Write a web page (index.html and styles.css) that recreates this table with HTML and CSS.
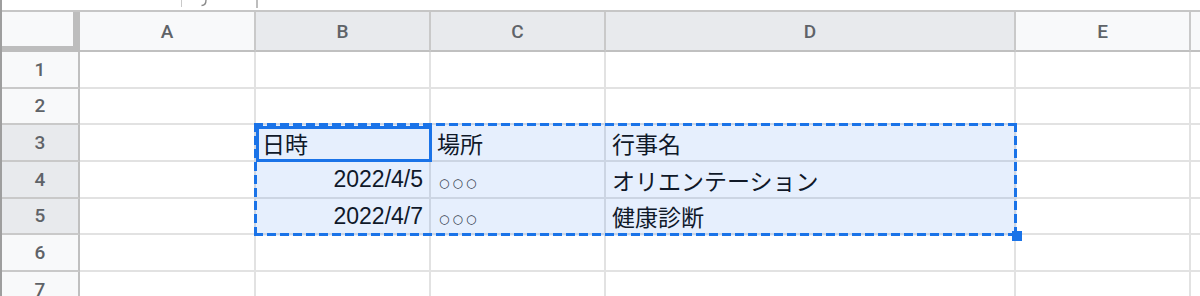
FILE: index.html
```html
<!DOCTYPE html>
<html lang="ja">
<head>
<meta charset="utf-8">
<title>シート1</title>
<link rel="stylesheet" href="styles.css">
</head>
<body>
<div class="sheet">
  <div class="formula-edge">
    <span class="fx-sep"></span>
    <svg class="fx-tail" width="10" height="7" viewBox="0 0 10 7"><path d="M7 0 C7 3.5 6 5.5 2.5 5.5" fill="none" stroke="#8a8a8a" stroke-width="1.4"/></svg>
    <span class="fx-sep dark"></span>
  </div>

  <div class="grid">
    <div class="corner"></div>
    <div class="col-head">A</div>
    <div class="col-head on">B</div>
    <div class="col-head on">C</div>
    <div class="col-head on">D</div>
    <div class="col-head">E</div>
    <div class="col-head"></div>

    <div class="row-head">1</div>
    <div class="cell"></div><div class="cell"></div><div class="cell"></div><div class="cell"></div><div class="cell"></div><div class="cell"></div>

    <div class="row-head">2</div>
    <div class="cell"></div><div class="cell"></div><div class="cell"></div><div class="cell"></div><div class="cell"></div><div class="cell"></div>

    <div class="row-head on">3</div>
    <div class="cell"></div>
    <div class="cell">日時</div>
    <div class="cell">場所</div>
    <div class="cell">行事名</div>
    <div class="cell"></div><div class="cell"></div>

    <div class="row-head on">4</div>
    <div class="cell"></div>
    <div class="cell num">2022/4/5</div>
    <div class="cell"><span class="marks">○○○</span></div>
    <div class="cell">オリエンテーション</div>
    <div class="cell"></div><div class="cell"></div>

    <div class="row-head on">5</div>
    <div class="cell"></div>
    <div class="cell num">2022/4/7</div>
    <div class="cell"><span class="marks">○○○</span></div>
    <div class="cell">健康診断</div>
    <div class="cell"></div><div class="cell"></div>

    <div class="row-head">6</div>
    <div class="cell"></div><div class="cell"></div><div class="cell"></div><div class="cell"></div><div class="cell"></div><div class="cell"></div>

    <div class="row-head">7</div>
    <div class="cell"></div><div class="cell"></div><div class="cell"></div><div class="cell"></div><div class="cell"></div><div class="cell"></div>

    <!-- copied range B3:D5 and the active cell B3, laid over the cells -->
    <div class="range"><span class="handle"></span></div>
    <div class="active"></div>
  </div>
</div>
</body>
</html>
```

FILE: styles.css
```css
html, body {
  margin: 0;
  padding: 0;
  background: #fff;
  overflow: hidden;
}

.sheet {
  width: 1200px;
  height: 296px;
  border-left: 2px solid #9e9e9e;
  box-sizing: border-box;
  overflow: hidden;
  font-family: "Liberation Sans", "Noto Sans CJK JP", Arial, sans-serif;
}

/* bottom edge of the formula bar */
.formula-edge {
  height: 10px;
  display: flex;
  align-items: flex-start;
  padding-left: 179px;
}
.fx-sep {
  width: 1px;
  height: 7px;
  background: #c9c9c9;
}
.fx-sep.dark {
  width: 2px;
  height: 8px;
  background: #bdbdbd;
  margin-left: 47px;
}
.fx-tail {
  margin-left: 17px;
}

.grid {
  position: relative;
  display: grid;
  grid-template-columns: 78px 176px 175px 175px 410px 175px 1fr;
  grid-template-rows: 40px 37px 36px 37px 37px 36px 37px 37px;
  border-top: 2px solid #c6c6c6;
}

.grid > div {
  box-sizing: border-box;
}

.corner {
  background: #f8f9fa;
  border-right: 7px solid #bdbdbd;
  border-bottom: 6px solid #bdbdbd;
}

.col-head {
  background: #f8f9fa;
  border-right: 2px solid #c9c9c9;
  border-bottom: 2px solid #c0c0c0;
  display: flex;
  align-items: center;
  justify-content: center;
  font-family: Roboto, "Liberation Sans", sans-serif;
  font-weight: 500;
  font-size: 19px;
  color: #5f6368;
}
.col-head.on,
.row-head.on {
  background: #e8eaed;
}

.row-head {
  background: #f8f9fa;
  border-right: 2px solid #c0c0c0;
  border-bottom: 2px solid #c9c9c9;
  display: flex;
  align-items: center;
  justify-content: center;
  padding-bottom: 1px;
  font-family: Roboto, "Liberation Sans", sans-serif;
  font-weight: 500;
  font-size: 19px;
  color: #5f6368;
}

.cell {
  border-right: 2px solid #e2e2e2;
  border-bottom: 2px solid #e2e2e2;
  display: flex;
  align-items: center;
  padding: 0 6px;
  font-size: 23px;
  color: #111;
  white-space: nowrap;
  overflow: hidden;
}
.cell.num {
  justify-content: flex-end;
}

.marks {
  font-family: "DejaVu Sans", sans-serif;
  font-size: 12px;
  letter-spacing: 3px;
  color: #333;
  padding: 6px 0 0 2px;
}

/* dashed copy border around B3:D5 */
.range {
  position: absolute;
  grid-column: 3 / 6;
  grid-row: 4 / 7;
  top: -2px;
  left: -2px;
  right: -1px;
  bottom: -1px;
  background:
    repeating-linear-gradient(90deg, #1a73e8 0 9px, transparent 9px 13px) top left / 100% 3px no-repeat,
    repeating-linear-gradient(90deg, #1a73e8 0 9px, transparent 9px 13px) bottom left / 100% 3px no-repeat,
    repeating-linear-gradient(180deg, #1a73e8 0 9px, transparent 9px 13px) top left / 3px 100% no-repeat,
    repeating-linear-gradient(180deg, #1a73e8 0 9px, transparent 9px 13px) top right / 3px 100% no-repeat,
    rgba(14, 101, 235, 0.1);
}

.handle {
  position: absolute;
  right: -5px;
  bottom: -5px;
  width: 10px;
  height: 10px;
  background: #1a73e8;
}

.active {
  position: absolute;
  grid-column: 3 / 4;
  grid-row: 4 / 5;
  top: 1px;
  left: 0;
  right: -1px;
  bottom: 0;
  border: 3px solid #1a73e8;
}
```
